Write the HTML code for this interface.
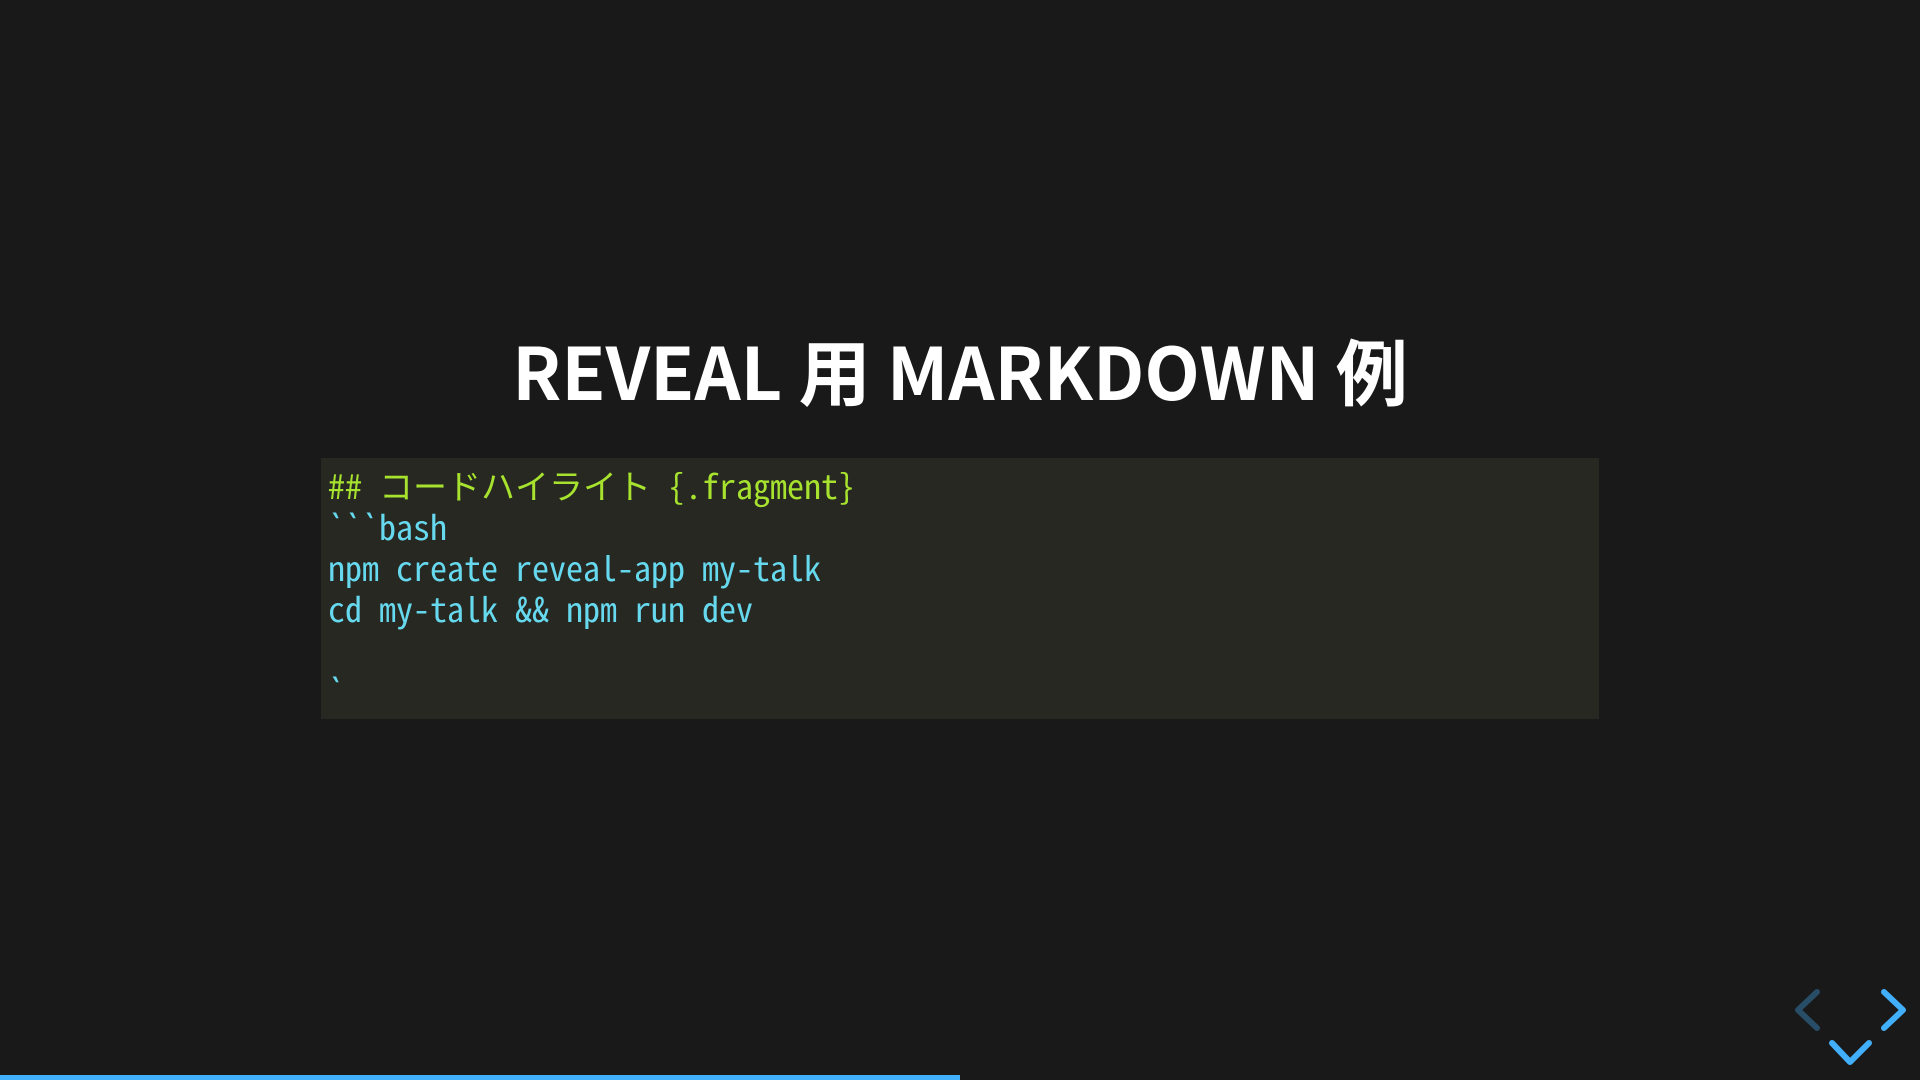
<!DOCTYPE html>
<html><head><meta charset="utf-8"><style>
html,body{margin:0;padding:0;width:1920px;height:1080px;background:#191919;overflow:hidden}
h2{position:absolute;left:0;width:1920px;top:326px;margin:0;text-align:center;color:#fff;font:bold 72px/1.2 "Noto Sans CJK JP","Liberation Sans",sans-serif}
.code{position:absolute;left:321px;top:458px;width:1278px;height:261px;background:#272822;box-sizing:border-box;padding:6px 7px;font:500 34px/41px "Noto Sans Mono CJK JP","Liberation Mono",monospace;color:#66d9ef;white-space:pre}
.g{color:#a6e22e}
.bar{position:absolute;left:0;bottom:0;height:5px;width:960px;background:#42affa}
svg{position:absolute;left:0;top:0}
</style></head><body>
<h2>REVEAL 用 MARKDOWN 例</h2>
<div class="code"><span class="g">## コードハイライト {.fragment}</span>
&#96;&#96;&#96;bash
npm create reveal-app my-talk
cd my-talk &amp;&amp; npm run dev

&#96;</div>
<div class="bar"></div>
<svg width="1920" height="1080">
<g fill="none" stroke-width="6" stroke-linecap="round" stroke-linejoin="round">
<polyline points="1817,992 1798,1010 1817,1028" stroke="#42affa" opacity="0.35"/>
<polyline points="1884,992 1903,1010 1884,1028" stroke="#42affa"/>
<polyline points="1832,1043 1850,1062 1869,1043" stroke="#42affa"/>
</g></svg>
</body></html>
